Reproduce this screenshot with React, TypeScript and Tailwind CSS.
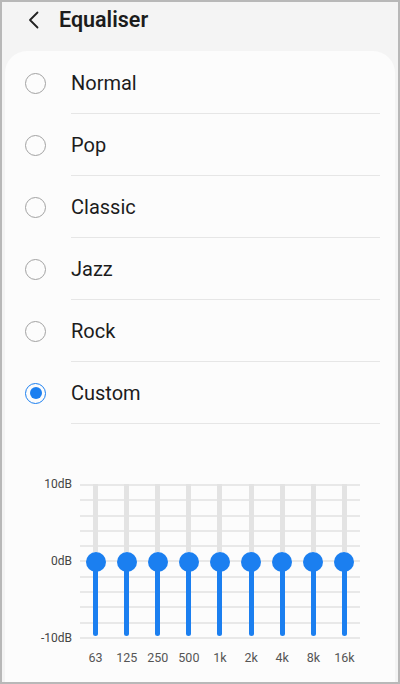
import React from "react";

const presets = ["Normal", "Pop", "Classic", "Jazz", "Rock", "Custom"];
const freqs = ["63", "125", "250", "500", "1k", "2k", "4k", "8k", "16k"];
const lines = Array.from({ length: 11 }, (_, i) => i);

export default function App() {
  return (
    <div
      className="w-[400px] h-[684px] border-2 border-[#b8b8b8] bg-[#f4f4f4] flex flex-col overflow-hidden"
      style={{ fontFamily: "Roboto, 'Noto Sans', 'Liberation Sans', sans-serif" }}
    >
      <div className="h-[49px] shrink-0">
        <div className="h-[35px] flex items-center">
          <svg width="14" height="18" viewBox="0 0 14 18" className="ml-[25px]">
            <path d="M10.5 1.5 L3 9 L10.5 16.5" fill="none" stroke="#222" strokeWidth="1.8" strokeLinecap="round" strokeLinejoin="round" />
          </svg>
          <span className="ml-[18px] text-[21.5px] font-semibold text-[#1c1c1c] leading-none">Equaliser</span>
        </div>
      </div>
      <div className="mx-[3px] flex-1 bg-[#fcfcfc] rounded-t-[22px] flex flex-col">
        <div className="pt-[1px] flex flex-col">
          {presets.map((p) => {
            const sel = p === "Custom";
            return (
              <div key={p} className="h-[62px] flex items-center pl-[20px]">
                <div
                  className={
                    sel
                      ? "w-[21px] h-[21px] rounded-full border-[1.5px] border-[#1b7ff0] flex items-center justify-center shrink-0"
                      : "w-[21px] h-[21px] rounded-full border-[1.5px] border-[#a2a2a2] shrink-0"
                  }
                >
                  {sel && <div className="w-[12px] h-[12px] rounded-full bg-[#1b7ff0]" />}
                </div>
                <div className="ml-[25px] mr-[15px] flex-1 h-full flex items-center border-b border-[#e6e6e6]">
                  <span className="text-[20px] text-[#1c1c1c] leading-none">{p}</span>
                </div>
              </div>
            );
          })}
        </div>
        <div className="mt-[60px] flex items-start">
          <div className="w-[67px] h-[168px] -mt-[7px] flex flex-col justify-between items-end text-[12px] leading-[14px] text-[#444]">
            <span>10dB</span>
            <span>0dB</span>
            <span>-10dB</span>
          </div>
          <div className="ml-[8px] w-[280px] flex flex-col">
            <div className="relative h-[155px]">
              <div className="absolute inset-0 flex flex-col justify-between">
                {lines.map((l) => (
                  <div key={l} className="h-[2px] bg-[#e8e8e8]" />
                ))}
              </div>
              <div className="absolute inset-0 grid grid-cols-9">
                {freqs.map((f) => (
                  <div key={f} className="flex flex-col items-center">
                    <div className="w-[5px] h-[68px] bg-[#e3e3e3]" />
                    <div className="w-[20px] h-[20px] rounded-full bg-[#1b7ff0]" />
                    <div className="w-[5px] h-[66px] -mt-[2px] bg-[#1b7ff0] rounded-b-full" />
                  </div>
                ))}
              </div>
            </div>
            <div className="mt-[11px] grid grid-cols-9 text-[12.5px] leading-[16px] text-[#555]">
              {freqs.map((f) => (
                <span key={f} className="text-center">{f}</span>
              ))}
            </div>
          </div>
        </div>
      </div>
    </div>
  );
}
